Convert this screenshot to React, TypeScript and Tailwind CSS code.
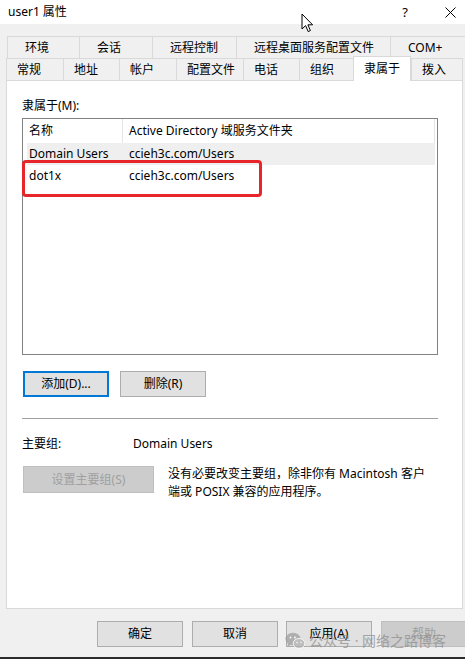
import React from 'react';

const row1 = [
  { label: '环境', w: 'w-[72px]' },
  { label: '会话', w: 'w-[73px]' },
  { label: '远程控制', w: 'w-[84px]' },
  { label: '远程桌面服务配置文件', w: 'w-[154px]' },
  { label: 'COM+', w: 'w-[80px]' },
];

const row2 = [
  { label: '常规', w: 'w-[57px]' },
  { label: '地址', w: 'w-[56px]' },
  { label: '帐户', w: 'w-[57px]' },
  { label: '配置文件', w: 'w-[67px]' },
  { label: '电话', w: 'w-[56px]' },
  { label: '组织', w: 'w-[54px]' },
  { label: '隶属于', w: 'w-[58px]', active: true },
  { label: '拨入', w: 'w-[52px]', last: true },
];

const groups = [
  { name: 'Domain Users', folder: 'ccieh3c.com/Users', shaded: true },
  { name: 'dot1x', folder: 'ccieh3c.com/Users' },
];

const App = () => {
  return (
    <div className="relative w-[465px] h-[659px] overflow-hidden bg-[#f0f0f0] text-[12px] leading-[16px] text-black font-['Noto_Sans','Noto_Sans_CJK_SC',sans-serif]">
      {/* Title bar */}
      <div className="h-[24px] bg-white flex items-center pl-[8px] pr-[9px]">
        <span>user1 属性</span>
        <span className="ml-auto text-[13px]">?</span>
        <svg className="ml-[37px]" width="11" height="11" viewBox="0 0 11 11">
          <path d="M0.5 0.5 L10.5 10.5 M10.5 0.5 L0.5 10.5" stroke="#000" strokeWidth="1" />
        </svg>
      </div>
      <div className="h-[12px]" />

      {/* Tabs */}
      <div className="flex h-[22px] pl-[7px]">
        {row1.map((t, i) => (
          <div
            key={i}
            className={`${t.w} shrink-0 flex items-center pl-[17px] border-t border-l border-[#d9d9d9] bg-[#f0f0f0] whitespace-nowrap`}
          >
            {t.label}
          </div>
        ))}
      </div>
      <div className="flex h-[22px] pl-[6px]">
        {row2.map((t, i) => (
          <div
            key={i}
            className={`${t.w} shrink-0 flex items-center pl-[10px] border-t border-l border-[#d9d9d9] whitespace-nowrap ${
              t.active ? 'relative z-10 bg-white border-r -mt-[2px] -mb-px' : 'bg-[#f0f0f0]'
            } ${t.last ? 'border-r' : ''}`}
          >
            {t.label}
          </div>
        ))}
      </div>

      {/* Panel */}
      <div className="ml-[6px] w-[457px] h-[529px] border border-[#d9d9d9] bg-white pl-[15px] pt-[17px]">
        <div>隶属于(M):</div>

        <div className="relative mt-[4px] w-[416px] h-[237px] border border-[#828282]">
          <div className="ml-[4px] w-[408px] flex h-[24px] items-center">
            <div className="w-[96px] h-full flex items-center pl-[2px] border-r border-[#e5e5e5]">名称</div>
            <div className="flex-1 h-full flex items-center pl-[6px] border-r border-[#e5e5e5]">
              Active Directory 域服务文件夹
            </div>
          </div>
          {groups.map((g, i) => (
            <div
              key={i}
              className={`ml-[4px] w-[408px] flex h-[22px] items-center ${g.shaded ? 'bg-[#efefef]' : ''}`}
            >
              <div className="w-[96px] pl-[2px]">{g.name}</div>
              <div className="pl-[6px]">{g.folder}</div>
            </div>
          ))}
          <div className="absolute left-[-1px] top-[41px] w-[240px] h-[37px] border-[3px] border-[#e8252b] rounded-[4px]" />
        </div>

        <div className="mt-[16px] ml-[1px] flex gap-[11px]">
          <button className="w-[86px] h-[26px] border-2 border-[#0078d7] bg-[#e1e1e1]">添加(D)...</button>
          <button className="w-[86px] h-[26px] border border-[#adadad] bg-[#e1e1e1]">删除(R)</button>
        </div>

        <div className="mt-[21px] h-px w-[416px] bg-[#a0a0a0]" />

        <div className="mt-[17px] flex">
          <span className="w-[111px]">主要组:</span>
          <span>Domain Users</span>
        </div>

        <div className="mt-[14px] flex items-start">
          <button className="ml-[1px] w-[131px] h-[27px] border border-[#bfbfbf] bg-[#cccccc] text-[#a0a0a0]">
            设置主要组(S)
          </button>
          <div className="ml-[14px] -mt-[1px] leading-[18px] whitespace-nowrap">
            没有必要改变主要组，除非你有 Macintosh 客户
            <br />
            端或 POSIX 兼容的应用程序。
          </div>
        </div>
      </div>

      {/* Dialog buttons */}
      <div className="mt-[12px] flex pl-[97px]">
        <button className="w-[86px] h-[26px] shrink-0 border border-[#adadad] bg-[#e1e1e1]">确定</button>
        <button className="ml-[9px] w-[86px] h-[26px] shrink-0 border border-[#adadad] bg-[#e1e1e1]">取消</button>
        <button className="ml-[8px] w-[86px] h-[26px] shrink-0 border border-[#adadad] bg-[#e1e1e1]">应用(A)</button>
        <button className="ml-[9px] w-[86px] h-[26px] shrink-0 border border-[#bfbfbf] bg-[#cccccc] text-[#a0a0a0]">帮助</button>
      </div>
      <div className="mt-[10px] h-[2px] bg-[#2b2b2b]" />

      {/* Watermark */}
      <div className="absolute left-[285px] top-[632px] flex items-center gap-[4px] opacity-70 text-[#8a8a8a] text-[14px] leading-[18px] whitespace-nowrap">
        <svg width="20" height="18" viewBox="0 0 20 18">
          <ellipse cx="8" cy="7" rx="7.5" ry="6.3" fill="#9a9a9a" />
          <path d="M3 11.5 L2.5 15 L6 12.5 Z" fill="#9a9a9a" />
          <ellipse cx="14" cy="11.5" rx="5.8" ry="5" fill="#b0b0b0" stroke="#fff" strokeWidth="1" />
          <circle cx="5.5" cy="5.5" r="1" fill="#fff" />
          <circle cx="10" cy="5.5" r="1" fill="#fff" />
          <circle cx="12" cy="10.5" r="0.8" fill="#fff" />
          <circle cx="16" cy="10.5" r="0.8" fill="#fff" />
        </svg>
        <span>公众号 · 网络之路博客</span>
      </div>

      {/* Mouse cursor */}
      <svg className="absolute left-[301px] top-[13px]" width="13" height="21" viewBox="0 0 13 21">
        <path
          d="M1 1 L1 16 L4.6 12.6 L7.2 18.6 L9.4 17.6 L6.9 11.8 L11.6 11.8 Z"
          fill="#fff"
          stroke="#000"
          strokeWidth="1"
          strokeLinejoin="round"
        />
      </svg>
    </div>
  );
};

export default App;
